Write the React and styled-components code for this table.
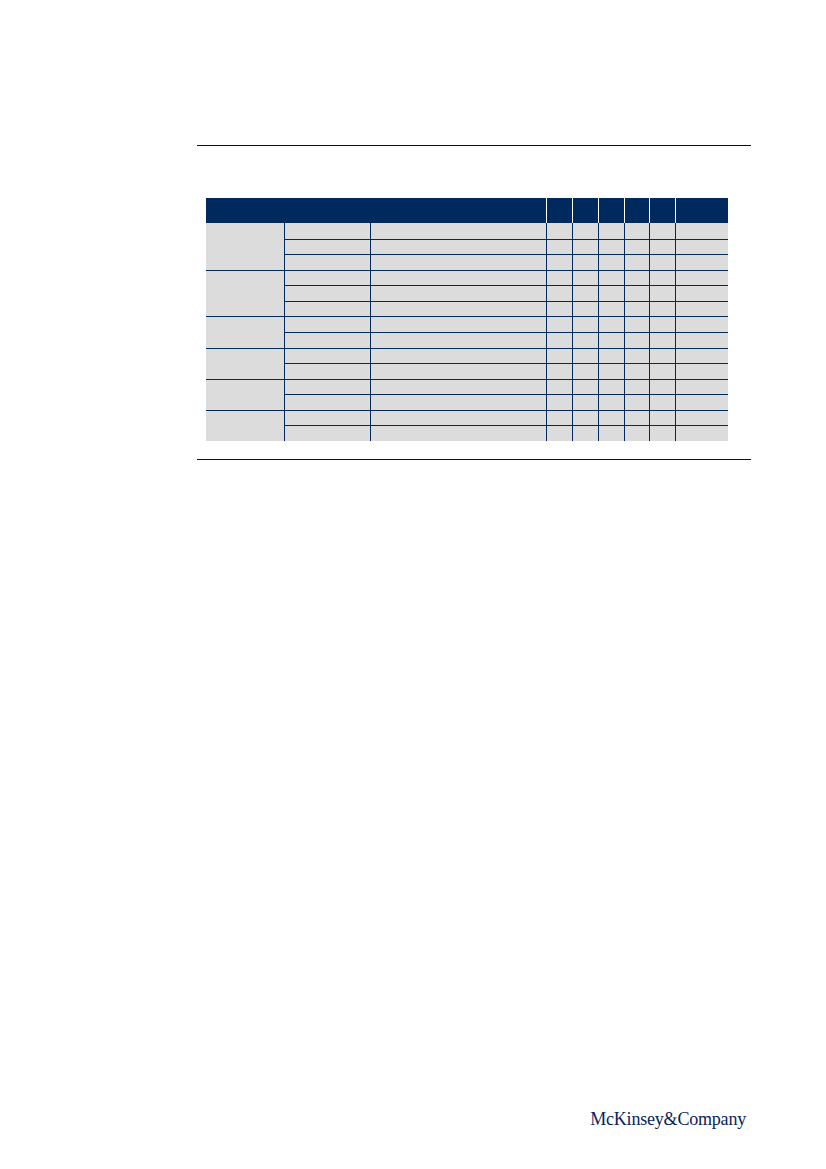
import styled, { createGlobalStyle } from "styled-components";

const NAVY = "#002a5e";

const GlobalStyle = createGlobalStyle`
    html, body {
        margin: 0;
        padding: 0;
        background: #ffffff;
    }
`;

const widths = [78, 86, 176, 26, 26, 26, 25, 26, 53];
const groups = [3, 3, 2, 2, 2, 2];

export default function App() {
    const rows = [];
    let rowIndex = 0;

    groups.forEach((size, g) => {
        for (let i = 0; i < size; i++) {
            if (i === 0) {
                rows.push(<GroupCell key={`g${g}`} $span={size} $top={g > 0} />);
            }
            for (let c = 1; c < widths.length; c++) {
                rows.push(<Cell key={`r${rowIndex}c${c}`} $top={rowIndex > 0} />);
            }
            rowIndex++;
        }
    });

    return (
        <>
            <GlobalStyle />
            <Page>
                <Content>
                    <Rule />
                    <Table>
                        <HeadCell $span={3} />
                        {widths.slice(3).map((_, i) => (
                            <HeadCell key={i} $divider />
                        ))}
                        {rows}
                    </Table>
                    <Rule $gap />
                </Content>
                <Footer>
                    <Logo>McKinsey&amp;Company</Logo>
                </Footer>
            </Page>
        </>
    );
}

const Page = styled.div`
    width: 826px;
    min-height: 1169px;
    display: flex;
    flex-direction: column;
`;

const Content = styled.div`
    width: 554px;
    padding: 145px 0 0 197px;
`;

const Rule = styled.div`
    height: 1px;
    background: #111111;
    margin-top: ${props => props.$gap ? "18px" : "0"};
`;

const Table = styled.div`
    display: grid;
    grid-template-columns: ${widths.map(w => `${w}px`).join(" ")};
    grid-template-rows: 25px repeat(14, 1fr);
    width: 522px;
    height: 243px;
    margin: 52px 0 0 9px;
    background: #dcdcdc;
`;

const HeadCell = styled.div`
    grid-column: span ${props => props.$span || 1};
    background: ${NAVY};
    border-left: ${props => props.$divider ? "1px solid #ffffff" : "none"};
    box-sizing: border-box;
`;

const GroupCell = styled.div`
    grid-row: span ${props => props.$span};
    border-top: ${props => props.$top ? `1px solid ${NAVY}` : "none"};
    box-sizing: border-box;
`;

const Cell = styled.div`
    border-left: 1px solid ${NAVY};
    border-top: ${props => props.$top ? `1px solid ${NAVY}` : "none"};
    box-sizing: border-box;
`;

const Footer = styled.div`
    margin-top: auto;
    display: flex;
    justify-content: flex-end;
    padding: 0 80px 40px 0;
`;

const Logo = styled.div`
    font-family: "Liberation Serif", "Times New Roman", serif;
    font-size: 18px;
    line-height: 20px;
    letter-spacing: -0.2px;
    color: #08245a;
`;
